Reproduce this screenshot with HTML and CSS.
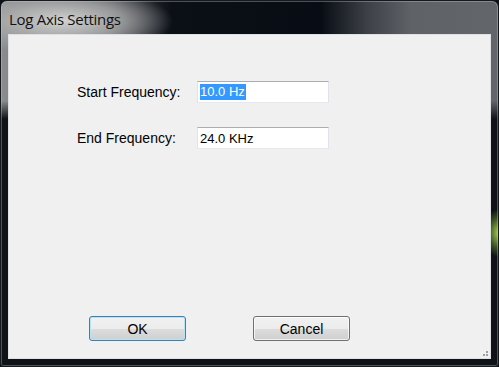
FILE: index.html
```html
<!DOCTYPE html>
<html lang="en">

<head>
    <meta charset="UTF-8">
    <title>Log Axis Settings</title>
    <link rel="stylesheet" href="styles.css">
</head>

<body>
    <section class="window">
        <header class="titlebar">
            <h1>Log Axis Settings</h1>
        </header>
        <main class="client">
            <div class="form">
                <label class="label">Start Frequency:</label>
                <div class="textbox"><span class="sel">10.0 Hz</span></div>
                <label class="label">End Frequency:</label>
                <div class="textbox">24.0 KHz</div>
            </div>
            <div class="buttons">
                <button class="btn focused">OK</button>
                <button class="btn">Cancel</button>
            </div>
            <span class="grip"></span>
        </main>
    </section>
</body>

</html>
```

FILE: styles.css
```css
body {
    margin: 0;
    background-color: #0d1117;
}

.window {
    box-sizing: border-box;
    width: 499px;
    height: 367px;
    display: flex;
    flex-direction: column;
    border: 1px solid #15181d;
    border-radius: 7px 7px 3px 3px;
    box-shadow: inset 0 0 0 1px rgba(200, 205, 210, 0.35);
    overflow: hidden;
    background:
        radial-gradient(ellipse 16px 24px at 498px 232px, rgba(175, 220, 85, 0.95), rgba(120, 170, 50, 0.45) 60%, rgba(0, 0, 0, 0) 100%),
        linear-gradient(180deg, rgba(14, 18, 24, 0) 0, rgba(14, 18, 24, 0) 100px, #0f1318 118px, #0f1318 100%),
        radial-gradient(ellipse 110px 34px at 62px 20px, rgba(215, 215, 215, 0.95), rgba(175, 175, 175, 0.75) 55%, rgba(120, 120, 120, 0) 100%),
        linear-gradient(90deg, #8a8c8e 0, #4a4e54 110px, #0b0f16 170px, #080c14 320px, #3c4046 365px, #5f6368 410px, #62666a 100%);
}

.titlebar {
    height: 33px;
    padding-left: 8px;
    display: flex;
    align-items: center;
}

.titlebar h1 {
    margin: 0;
    padding-top: 3px;
    font-family: "Open Sans", sans-serif;
    font-size: 15px;
    font-weight: normal;
    letter-spacing: -0.3px;
    color: #111;
}

.client {
    position: relative;
    flex: 1;
    margin: 0 7px 7px 7px;
    border: 1px solid #dde1e5;
    background-color: #f0f0f0;
    display: flex;
    flex-direction: column;
    font-family: "Liberation Sans", Arial, sans-serif;
    color: #000;
}

.form {
    padding: 46px 0 0 68px;
    display: grid;
    grid-template-columns: 120px 132px;
    grid-auto-rows: 22px;
    row-gap: 24px;
    align-items: center;
}

.label {
    font-size: 14px;
}

.textbox {
    box-sizing: border-box;
    height: 22px;
    padding: 0 0 0 2px;
    display: flex;
    align-items: center;
    font-size: 13px;
    background-color: #fff;
    border: 1px solid #e2e3ea;
    border-top-color: #abadb3;
    border-bottom-color: #e3e9ef;
}

.sel {
    background-color: #3399ff;
    color: #fff;
    line-height: 16px;
    padding-right: 1px;
}

.buttons {
    margin-top: auto;
    padding: 0 0 17px 80px;
    display: flex;
    gap: 67px;
}

.btn {
    box-sizing: border-box;
    width: 97px;
    height: 25px;
    padding: 0;
    font-family: "Liberation Sans", Arial, sans-serif;
    font-size: 14px;
    color: #000;
    border: 1px solid #707070;
    border-radius: 3px;
    background: linear-gradient(180deg, #f2f2f2 0, #ebebeb 50%, #dddddd 50%, #cfcfcf 100%);
    box-shadow: inset 0 0 0 1px rgba(255, 255, 255, 0.7);
}

.btn.focused {
    border-color: #3c7fb1;
    box-shadow: inset 0 0 0 1px #b6e3f8;
}

.grip {
    position: absolute;
    right: 1px;
    bottom: 1px;
    width: 6px;
    height: 6px;
    background:
        radial-gradient(circle at 4px 1px, #9aa0a6 0.8px, transparent 1.2px),
        radial-gradient(circle at 1px 4px, #9aa0a6 0.8px, transparent 1.2px),
        radial-gradient(circle at 4px 4px, #9aa0a6 0.8px, transparent 1.2px);
}
```
